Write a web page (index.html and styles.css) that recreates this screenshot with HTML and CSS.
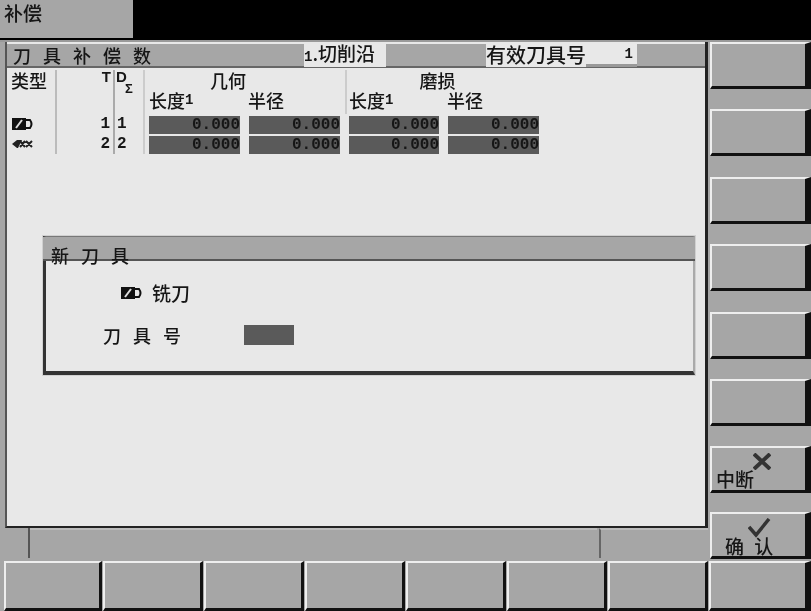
FILE: index.html
```html
<!DOCTYPE html>
<html lang="zh-CN">
<head>
    <meta charset="UTF-8">
    <title>补偿</title>
    <link rel="stylesheet" href="styles.css">
</head>
<body>
<div class="screen">
    <!-- top tab -->
    <div class="top-bar">
        <div class="top-tab">补偿</div>
    </div>

    <div class="middle">
        <div class="main">
            <div class="panel">
                <div class="title-bar">
                    <span class="title">刀具补偿数</span>
                    <span class="edge-label"><b>1</b>.切削沿</span>
                    <span class="active-tool">有效刀具号<span class="active-value">1</span></span>
                </div>

                <div class="tool-table">
                    <div class="head-type">类型</div>
                    <div class="head-t">T</div>
                    <div class="head-d">D<sub>Σ</sub></div>
                    <div class="head-group head-geo">几何</div>
                    <div class="head-group head-wear">磨损</div>
                    <div class="head-len">长度<b>1</b></div>
                    <div class="head-rad">半径</div>
                    <div class="head-len head-len-wear">长度<b>1</b></div>
                    <div class="head-rad">半径</div>

                    <!-- tool 1 -->
                    <div class="cell-type">
                        <svg class="tool-icon" width="21" height="12" viewBox="0 0 21 12">
                            <rect x="0" y="0" width="14" height="12" fill="#111"></rect>
                            <path d="M14 2 H18 Q21 6 18 10 H14" fill="none" stroke="#111" stroke-width="2"></path>
                            <path d="M4 10 L10 2" stroke="#ddd" stroke-width="2"></path>
                        </svg>
                    </div>
                    <div class="cell-t">1</div>
                    <div class="cell-d">1</div>
                    <div class="field">0.000</div>
                    <div class="field">0.000</div>
                    <div class="field">0.000</div>
                    <div class="field">0.000</div>

                    <!-- tool 2 -->
                    <div class="cell-type">
                        <svg class="tool-icon" width="21" height="10" viewBox="0 0 21 10">
                            <path d="M0 5 L5 1 H10 L6 9 H5 Z" fill="#222"></path>
                            <path d="M8 2 L13 8 M13 2 L8 8 M14 2 L20 8 M20 2 L14 8" stroke="#222" stroke-width="2"></path>
                        </svg>
                    </div>
                    <div class="cell-t">2</div>
                    <div class="cell-d">2</div>
                    <div class="field">0.000</div>
                    <div class="field">0.000</div>
                    <div class="field">0.000</div>
                    <div class="field">0.000</div>
                </div>

                <!-- dialog lies over the panel -->
                <div class="dialog">
                    <div class="dialog-title">新刀具</div>
                    <div class="dialog-type">
                        <svg class="tool-icon" width="21" height="12" viewBox="0 0 21 12">
                            <rect x="0" y="0" width="14" height="12" fill="#111"></rect>
                            <path d="M14 2 H18 Q21 6 18 10 H14" fill="none" stroke="#111" stroke-width="2"></path>
                            <path d="M4 10 L10 2" stroke="#ddd" stroke-width="2"></path>
                        </svg>
                        <span>铣刀</span>
                    </div>
                    <div class="dialog-row">
                        <span class="dialog-label">刀具号</span>
                        <span class="dialog-input"></span>
                    </div>
                </div>
            </div>

            <div class="status-row">
                <div class="status-cell status-a"></div>
                <div class="status-cell status-b"></div>
                <div class="status-cell status-c"></div>
            </div>
        </div>

        <!-- vertical softkeys -->
        <div class="side-keys">
            <div class="key side-key"></div>
            <div class="key side-key"></div>
            <div class="key side-key"></div>
            <div class="key side-key"></div>
            <div class="key side-key"></div>
            <div class="key side-key"></div>
            <div class="key side-key key-cancel">
                <svg class="key-icon" width="18" height="17" viewBox="0 0 18 17">
                    <path d="M1 1 L17 16 M17 1 L1 16" stroke="#333" stroke-width="4"></path>
                </svg>
                <span>中断</span>
            </div>
            <div class="key side-key key-ok">
                <svg class="key-icon" width="23" height="20" viewBox="0 0 23 20">
                    <path d="M1 9 L8 17 L21 1" fill="none" stroke="#333" stroke-width="3.5"></path>
                </svg>
                <span>确 认</span>
            </div>
        </div>
    </div>

    <!-- horizontal softkeys -->
    <div class="bottom-keys">
        <div class="key"></div>
        <div class="key"></div>
        <div class="key"></div>
        <div class="key"></div>
        <div class="key"></div>
        <div class="key"></div>
        <div class="key"></div>
        <div class="key key-last"></div>
    </div>
</div>
</body>
</html>
```

FILE: styles.css
```css
:root {
    --gray: #a6a6a6;
    --paper: #e8e8e8;
    --field: #5a5a5a;
    --ink: #161616;
    --font-cjk: "Noto Sans CJK SC", "Liberation Sans", sans-serif;
    --font-num: "Liberation Mono", monospace;
}

html, body {
    margin: 0;
    padding: 0;
    background: var(--gray);
}

.screen {
    width: 811px;
    height: 611px;
    overflow: hidden;
    display: flex;
    flex-direction: column;
    background: var(--gray);
    color: var(--ink);
    font-family: var(--font-cjk);
    font-weight: 500;
    font-size: 18px;
    line-height: 20px;
    filter: blur(0.5px);
}

/* --- top --- */
.top-bar {
    height: 40px;
    flex-shrink: 0;
    background: #000;
    border-bottom: 2px solid #9a9a9a;
}

.top-tab {
    width: 129px;
    height: 36px;
    padding: 2px 0 0 4px;
    background: var(--gray);
    font-size: 19px;
    line-height: 22px;
}

.middle {
    flex: 1;
    display: flex;
    min-height: 0;
}

/* --- main area --- */
.main {
    width: 708px;
    display: flex;
    flex-direction: column;
}

.panel {
    position: relative;
    height: 486px;
    margin-left: 5px;
    box-sizing: border-box;
    background: var(--paper);
    border-left: 2px solid #555;
    border-right: 3px solid #222;
    border-bottom: 2px solid #222;
}

.title-bar {
    display: flex;
    align-items: center;
    height: 22px;
    margin-top: 2px;
    background: var(--gray);
    border-bottom: 2px solid #666;
}

.title {
    width: 291px;
    padding-left: 6px;
    box-sizing: border-box;
    margin-right: 6px;
    letter-spacing: 12px;
    white-space: nowrap;
}

.edge-label {
    width: 82px;
    margin-right: 100px;
    box-sizing: border-box;
    background: var(--paper);
    font-size: 19px;
    white-space: nowrap;
}

.edge-label b {
    font-family: var(--font-num);
    font-size: 14px;
}

.active-tool {
    display: flex;
    align-items: center;
    background: var(--paper);
    font-size: 20px;
}

.active-value {
    width: 51px;
    padding-right: 4px;
    box-sizing: border-box;
    text-align: right;
    font-family: var(--font-num);
    font-weight: bold;
    font-size: 14px;
    border-bottom: 3px solid #999;
}

/* --- table --- */
.tool-table {
    display: grid;
    grid-template-columns: 50px 58px 30px 100px 100px 99px 100px;
    grid-template-rows: 20px 24px 20px 20px;
    width: 537px;
    margin-top: 2px;
}

.head-type {
    grid-row: 1 / span 2;
    padding-left: 4px;
    border-right: 2px solid #bbb;
}

.head-t,
.head-d {
    grid-row: 1 / span 2;
    font-family: "Liberation Sans", sans-serif;
    font-weight: bold;
    font-size: 15px;
    line-height: 14px;
}

.head-t {
    text-align: right;
    padding-right: 2px;
    border-right: 2px solid #aaa;
}

.head-d {
    padding-left: 1px;
    border-right: 2px solid #ccc;
}

.head-d sub {
    display: block;
    margin: 0 0 0 9px;
    font-size: 13px;
    line-height: 10px;
}

.head-group {
    grid-column: span 2;
    text-align: center;
}

.head-geo {
    padding-right: 34px;
}

.head-wear {
    padding-right: 16px;
    border-left: 2px solid #ccc;
}

.head-len,
.head-rad {
    padding-left: 4px;
    white-space: nowrap;
}

.head-len-wear {
    border-left: 2px solid #ccc;
    padding-left: 2px;
}

.head-len b {
    font-family: var(--font-num);
    font-size: 14px;
    vertical-align: 4px;
}

.head-rad {
    padding-left: 3px;
}

.cell-type {
    display: flex;
    align-items: center;
    padding-left: 5px;
    border-right: 2px solid #bbb;
}

.cell-t,
.cell-d {
    font-family: var(--font-num);
    font-weight: bold;
    font-size: 16px;
    line-height: 20px;
}

.cell-t {
    text-align: right;
    padding-right: 3px;
    border-right: 2px solid #aaa;
}

.cell-d {
    padding-left: 2px;
    border-right: 2px solid #ccc;
}

.field {
    height: 18px;
    margin: 2px 5px 0 4px;
    background: var(--field);
    color: var(--ink);
    text-align: right;
    font-family: var(--font-num);
    font-weight: bold;
    font-size: 16px;
    line-height: 18px;
}

/* --- dialog --- */
.dialog {
    position: absolute;
    left: 36px;
    top: 194px;
    width: 652px;
    height: 139px;
    box-sizing: border-box;
    background: var(--paper);
    border-top: 1px solid #777;
    border-left: 3px solid #333;
    border-right: 2px solid #aaa;
    border-bottom: 4px solid #333;
    box-shadow: 0 0 0 1px #d0d0d0;
}

.dialog-title {
    height: 22px;
    padding-left: 8px;
    margin: 0 -2px 0 -3px;
    background: var(--gray);
    border-bottom: 2px solid #555;
    letter-spacing: 12px;
    line-height: 36px;
    white-space: nowrap;
}

.dialog-type {
    display: flex;
    align-items: center;
    gap: 10px;
    margin: 22px 0 0 75px;
    font-size: 19px;
}

.dialog-row {
    display: flex;
    align-items: center;
    margin: 22px 0 0 57px;
}

.dialog-label {
    width: 141px;
    letter-spacing: 12px;
    white-space: nowrap;
}

.dialog-input {
    width: 50px;
    height: 20px;
    background: var(--field);
}

/* --- status row --- */
.status-row {
    display: flex;
    gap: 2px;
    height: 30px;
    box-sizing: border-box;
}

.status-cell {
    background: var(--gray);
    box-sizing: border-box;
}

.status-a {
    width: 30px;
    margin-right: -2px;
    border-right: 2px solid #555;
}

.status-b {
    flex: 1;
    border-top: 2px solid #bbb;
}

.status-c {
    width: 109px;
    border-top: 2px solid #bbb;
    border-left: 2px solid #666;
}

/* --- softkeys --- */
.key {
    box-sizing: border-box;
    background: var(--gray);
    border-top: 2px solid #eee;
    border-left: 2px solid #eee;
    border-right: 3px solid #111;
    border-bottom: 3px solid #111;
}

.key-last,
.side-key {
    border-right-width: 6px;
}

.side-keys {
    flex: 1;
    display: flex;
    flex-direction: column;
    gap: 20.4px;
    padding-left: 2px;
    min-width: 0;
}

.side-key {
    position: relative;
    height: 47px;
    flex-shrink: 0;
}

.key-cancel,
.key-ok {
    font-size: 19px;
}

.key-icon {
    position: absolute;
    left: 41px;
    top: 5px;
}

.key-cancel span {
    position: absolute;
    left: 4px;
    top: 21px;
    white-space: nowrap;
}

.key-ok {
    margin-top: -2px;
}

.key-ok .key-icon {
    left: 36px;
    top: 4px;
}

.key-ok span {
    position: absolute;
    left: 13px;
    top: 22px;
    word-spacing: 6px;
    white-space: nowrap;
}

.bottom-keys {
    display: grid;
    grid-template-columns: 98px repeat(6, 100px) 1fr;
    gap: 0 1px;
    height: 51px;
    flex-shrink: 0;
    padding: 1px 0 0 4px;
    box-sizing: border-box;
}
```
